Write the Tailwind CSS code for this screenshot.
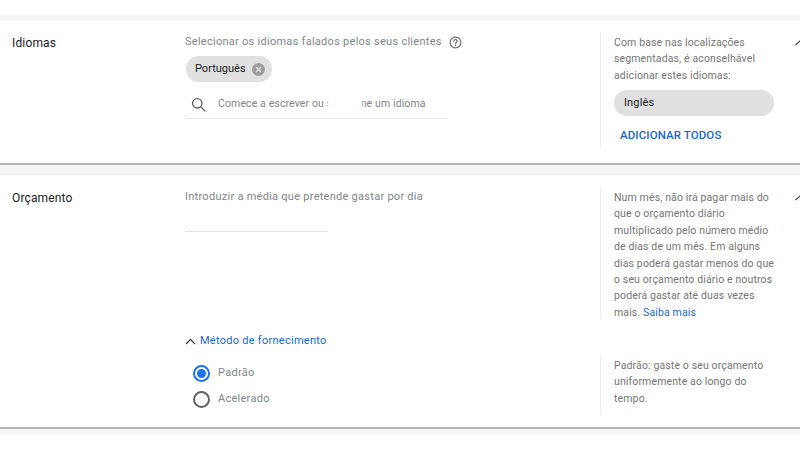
<!DOCTYPE html>
<html lang="en">
<head>
    <meta charset="UTF-8">
    <title>Idiomas e Orçamento</title>
    <script src="https://cdn.jsdelivr.net/npm/@tailwindcss/browser@4"></script>
</head>
<body class="bg-white font-['Roboto',sans-serif] w-[800px] h-[450px] overflow-hidden">
    <div class="h-[15px] bg-white"></div>
    <div class="bg-[#f5f5f5] pt-[6px] pb-[6px]">
        <!-- Idiomas -->
        <section class="relative bg-white h-[144px] border-b-[2px] border-[#b5b5b5] flex">
            <h2 class="w-[185px] pl-[12px] pt-[14px] text-[12px] leading-[16px] tracking-[0.15px] text-[#202124] shrink-0">Idiomas</h2>
            <div class="w-[415px] shrink-0 pt-[14px]">
                <div class="flex items-center gap-[7px] text-[11px] leading-[14px] tracking-[0.27px] text-[#80868b]">
                    <span>Selecionar os idiomas falados pelos seus clientes</span>
                    <svg class="w-[13px] h-[13px]" viewBox="0 0 24 24" fill="none" stroke="#5f6368" stroke-width="2"><circle cx="12" cy="12" r="10"/><path d="M9 9.5a3 3 0 1 1 4.6 2.5c-1 .7-1.6 1.3-1.6 2.5" stroke-linecap="round"/><path d="M12 16.5v2"/></svg>
                </div>
                <div class="mt-[7px] ml-[1px] inline-flex items-center h-[26px] w-[86px] pl-[9px] rounded-full bg-[#e0e0e0] text-[11px] text-[#202124]">
                    <span>Português</span>
                    <svg class="ml-[6px] w-[13px] h-[13px]" viewBox="0 0 24 24"><circle cx="12" cy="12" r="12" fill="#9e9e9e"/><path d="M7.5 7.5l9 9M16.5 7.5l-9 9" stroke="#e0e0e0" stroke-width="2.6"/></svg>
                </div>
                <div class="relative mt-[8px] w-[263px] h-[29px] border-b border-[#e4e4e4] flex items-center pl-[6px]">
                    <svg class="w-[15px] h-[15px]" viewBox="0 0 24 24" fill="none" stroke="#5f6368" stroke-width="2.2"><circle cx="10" cy="10" r="7.5"/><path d="M15.5 15.5L23 23"/></svg>
                    <span class="ml-[12px] text-[10.5px] tracking-[0.12px] text-[#80868b]">Comece a escrever ou selecione um idioma</span>
                    <div class="absolute left-[143px] top-[4px] w-[34px] h-[22px] bg-white"></div>
                </div>
            </div>
            <aside class="mt-[11px] h-[116px] w-[180px] border-l border-[#ececec] pl-[13px] pt-[3px] text-[10.5px] leading-[16.4px] tracking-[0.13px] text-[#757575]">
                <p>Com base nas localizações segmentadas, é aconselhável adicionar estes idiomas:</p>
                <div class="mt-[6px] w-[160px] h-[26px] rounded-full bg-[#e0e0e0] pl-[10px] flex items-center text-[11px] text-[#202124]">Inglês</div>
                <a class="block mt-[11px] ml-[6px] text-[11.5px] font-medium tracking-[0.1px] text-[#1a68c9]">ADICIONAR TODOS</a>
            </aside>
            <svg class="absolute left-[795px] top-[19px] w-[6px] h-[6px]" viewBox="0 0 6 6" fill="none" stroke="#444" stroke-width="1.2"><path d="M0.5 5L5.5 0.5"/></svg>
        </section>
        <div class="h-[10px] border-b border-[#ececec]"></div>
        <!-- Orçamento -->
        <section class="relative bg-white h-[254px] border-b-[2px] border-[#b5b5b5] flex">
            <h2 class="w-[185px] pl-[12px] pt-[15px] text-[12px] leading-[16px] tracking-[0.15px] text-[#202124] shrink-0">Orçamento</h2>
            <div class="w-[415px] shrink-0 pt-[15px]">
                <p class="text-[11px] leading-[14px] tracking-[0.27px] text-[#80868b]">Introduzir a média que pretende gastar por dia</p>
                <div class="mt-[27px] w-[143px] border-b border-[#e4e4e4]"></div>
                <div class="mt-[101px] flex items-center gap-[4px] text-[11px] tracking-[0.27px] text-[#1a68c9]">
                    <svg class="w-[11px] h-[7px]" viewBox="0 0 11 7" fill="none" stroke="#3c4043" stroke-width="1.3"><path d="M1 6l4.5-4.5L10 6"/></svg>
                    <span>Método de fornecimento</span>
                </div>
                <div class="mt-[16px] ml-[8px] flex flex-col gap-[10px] text-[11px] tracking-[0.27px] text-[#80868b]">
                    <label class="flex items-center gap-[8px] h-[16px]">
                        <span class="w-[17px] h-[17px] rounded-full border-[2px] border-[#1a73e8] flex items-center justify-center"><span class="w-[9px] h-[9px] rounded-full bg-[#1a73e8]"></span></span>
                        <span>Padrão</span>
                    </label>
                    <label class="flex items-center gap-[8px] h-[16px]">
                        <span class="w-[17px] h-[17px] rounded-full border-[2px] border-[#5f6368]"></span>
                        <span>Acelerado</span>
                    </label>
                </div>
            </div>
            <div class="flex flex-col text-[10.5px] leading-[16.4px] tracking-[0.13px] text-[#757575]">
                <aside class="mt-[12px] h-[132px] w-[180px] border-l border-[#ececec] pl-[13px] pt-[3px]">
                    Num mês, não irá pagar mais do que o orçamento diário multiplicado pelo número médio de dias de um mês. Em alguns dias poderá gastar menos do que o seu orçamento diário e noutros poderá gastar até duas vezes mais. <a class="text-[#1a68c9]">Saiba mais</a>
                </aside>
                <aside class="mt-[36px] h-[60px] w-[180px] border-l border-[#ececec] pl-[13px] pt-[3px]">
                    Padrão: gaste o seu orçamento uniformemente ao longo do tempo.
                </aside>
            </div>
            <svg class="absolute left-[795px] top-[20px] w-[6px] h-[6px]" viewBox="0 0 6 6" fill="none" stroke="#444" stroke-width="1.2"><path d="M0.5 5L5.5 0.5"/></svg>
        </section>
    </div>
</body>
</html>
